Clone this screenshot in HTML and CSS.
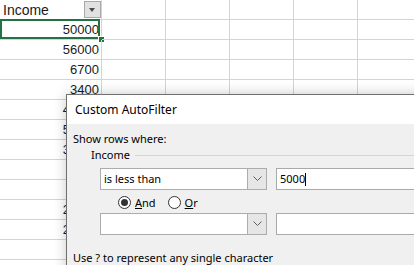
FILE: index.html
```html
<!DOCTYPE html>
<html lang="en">
<head>
    <meta charset="UTF-8">
    <meta name="viewport" content="width=device-width, initial-scale=1.0">
    <title>Custom AutoFilter</title>
    <link rel="stylesheet" href="styles.css">
</head>
<body>
    <!-- Worksheet -->
    <div class="sheet">
        <div class="row">
            <div class="cell col-a head">Income<span class="filter-btn"></span></div>
            <div class="cell"></div><div class="cell"></div><div class="cell"></div><div class="cell"></div><div class="cell"></div><div class="cell"></div>
        </div>
        <div class="row">
            <div class="cell col-a num selected">50000<span class="fill-handle"></span></div>
            <div class="cell"></div><div class="cell"></div><div class="cell"></div><div class="cell"></div><div class="cell"></div><div class="cell"></div>
        </div>
        <div class="row">
            <div class="cell col-a num">56000</div>
            <div class="cell"></div><div class="cell"></div><div class="cell"></div><div class="cell"></div><div class="cell"></div><div class="cell"></div>
        </div>
        <div class="row">
            <div class="cell col-a num">6700</div>
            <div class="cell"></div><div class="cell"></div><div class="cell"></div><div class="cell"></div><div class="cell"></div><div class="cell"></div>
        </div>
        <div class="row">
            <div class="cell col-a num">3400</div>
            <div class="cell"></div><div class="cell"></div><div class="cell"></div><div class="cell"></div><div class="cell"></div><div class="cell"></div>
        </div>
        <div class="row">
            <div class="cell col-a num">45000</div>
            <div class="cell"></div><div class="cell"></div><div class="cell"></div><div class="cell"></div><div class="cell"></div><div class="cell"></div>
        </div>
        <div class="row">
            <div class="cell col-a num">52000</div>
            <div class="cell"></div><div class="cell"></div><div class="cell"></div><div class="cell"></div><div class="cell"></div><div class="cell"></div>
        </div>
        <div class="row">
            <div class="cell col-a num">38000</div>
            <div class="cell"></div><div class="cell"></div><div class="cell"></div><div class="cell"></div><div class="cell"></div><div class="cell"></div>
        </div>
        <div class="row">
            <div class="cell col-a num">7800</div>
            <div class="cell"></div><div class="cell"></div><div class="cell"></div><div class="cell"></div><div class="cell"></div><div class="cell"></div>
        </div>
        <div class="row">
            <div class="cell col-a num">9100</div>
            <div class="cell"></div><div class="cell"></div><div class="cell"></div><div class="cell"></div><div class="cell"></div><div class="cell"></div>
        </div>
        <div class="row">
            <div class="cell col-a num">21000</div>
            <div class="cell"></div><div class="cell"></div><div class="cell"></div><div class="cell"></div><div class="cell"></div><div class="cell"></div>
        </div>
        <div class="row">
            <div class="cell col-a num">24000</div>
            <div class="cell"></div><div class="cell"></div><div class="cell"></div><div class="cell"></div><div class="cell"></div><div class="cell"></div>
        </div>
        <div class="row">
            <div class="cell col-a num">6500</div>
            <div class="cell"></div><div class="cell"></div><div class="cell"></div><div class="cell"></div><div class="cell"></div><div class="cell"></div>
        </div>
        <div class="row">
            <div class="cell col-a num"></div>
            <div class="cell"></div><div class="cell"></div><div class="cell"></div><div class="cell"></div><div class="cell"></div><div class="cell"></div>
        </div>
    </div>

    <!-- Custom AutoFilter dialog -->
    <div class="dialog">
        <div class="dialog-title">Custom AutoFilter</div>
        <div class="dialog-body">
            <div class="label">Show rows where:</div>
            <div class="group-label"><span>Income</span></div>

            <div class="criteria">
                <div class="combo">
                    <span class="combo-text">is less than</span>
                    <span class="combo-btn"><svg width="9" height="6" viewBox="0 0 9 6"><path d="M0.5 0.5 L4.5 4.5 L8.5 0.5" fill="none" stroke="#606060" stroke-width="1"/></svg></span>
                </div>
                <div class="textbox">5000<span class="caret"></span></div>
            </div>

            <div class="radios">
                <label class="radio"><span class="dot checked"></span><span><u>A</u>nd</span></label>
                <label class="radio"><span class="dot"></span><span><u>O</u>r</span></label>
            </div>

            <div class="criteria second">
                <div class="combo">
                    <span class="combo-text"></span>
                    <span class="combo-btn"><svg width="9" height="6" viewBox="0 0 9 6"><path d="M0.5 0.5 L4.5 4.5 L8.5 0.5" fill="none" stroke="#606060" stroke-width="1"/></svg></span>
                </div>
                <div class="textbox"></div>
            </div>

            <div class="hint">Use ? to represent any single character</div>
        </div>
    </div>
</body>
</html>
```

FILE: styles.css
```css
/* General */
body {
    margin: 0;
    width: 414px;
    height: 265px;
    overflow: hidden;
    position: relative;
    background: #ffffff;
}

/* Worksheet grid */
.sheet {
    font-family: "Liberation Sans", Arial, sans-serif;
    font-size: 13px;
    color: #1a1a1a;
}
.row {
    display: grid;
    grid-template-columns: 102px repeat(5, 64px) 1fr;
    height: 20px;
}
.cell {
    box-sizing: border-box;
    height: 20px;
    border-right: 1px solid #d4d4d4;
    border-bottom: 1px solid #d4d4d4;
    position: relative;
    display: flex;
    align-items: flex-end;
    line-height: 16px;
    padding-bottom: 1px;
}
.cell.head {
    font-size: 14px;
    padding-left: 3px;
}
.cell.num {
    justify-content: flex-end;
    padding-right: 2px;
}
.filter-btn {
    position: absolute;
    right: 0;
    top: 1px;
    width: 15px;
    height: 15px;
    background: #e1e1e1;
    border: 1px solid #a9a9a9;
}
.filter-btn::after {
    content: "";
    position: absolute;
    left: 4px;
    top: 6px;
    border-left: 3.5px solid transparent;
    border-right: 3.5px solid transparent;
    border-top: 4px solid #4a4a4a;
}
.selected::before {
    content: "";
    position: absolute;
    left: 0;
    top: -1px;
    right: 1px;
    bottom: 0;
    border: 2px solid #217346;
}
.fill-handle {
    position: absolute;
    left: 98px;
    top: 16px;
    width: 5px;
    height: 5px;
    background: #217346;
    border-left: 1px solid #ffffff;
    border-top: 1px solid #ffffff;
}

/* Dialog */
.dialog {
    position: absolute;
    left: 66px;
    top: 94px;
    width: 420px;
    height: 200px;
    border: 1px solid #707070;
    background: #f0f0f0;
    box-shadow: 0 0 12px rgba(0, 0, 0, 0.22);
    font-family: "Noto Sans", "Segoe UI", sans-serif;
    font-size: 11px;
    color: #000000;
}
.dialog-title {
    height: 29px;
    background: #ffffff;
    font-size: 12px;
    line-height: 29px;
    padding-left: 8px;
}
.dialog-body {
    padding: 7px 0 0 6px;
    display: flex;
    flex-direction: column;
}
.label {
    line-height: 16px;
}
.group-label {
    display: flex;
    align-items: center;
    gap: 5px;
    margin-left: 18px;
    line-height: 16px;
}
.group-label::after {
    content: "";
    flex: 1;
    border-top: 1px solid #d5d5d5;
    margin-top: 1px;
}
.criteria {
    display: flex;
    gap: 9px;
    margin: 5px 0 0 27px;
}
.criteria.second {
    margin-top: 5px;
}
.combo {
    box-sizing: border-box;
    width: 167px;
    height: 22px;
    border: 1px solid #acacac;
    background: #ffffff;
    display: flex;
}
.combo-text {
    flex: 1;
    padding-left: 3px;
    line-height: 20px;
}
.combo-btn {
    box-sizing: border-box;
    width: 19px;
    background: #e6e6e6;
    border-left: 1px solid #acacac;
    display: flex;
    align-items: center;
    justify-content: center;
}
.textbox {
    box-sizing: border-box;
    flex: 1;
    height: 22px;
    border: 1px solid #a9a9a9;
    background: #ffffff;
    padding-left: 3px;
    line-height: 20px;
    display: flex;
    align-items: center;
}
.caret {
    width: 1px;
    height: 13px;
    background: #000000;
}
.radios {
    display: flex;
    gap: 12px;
    margin: 6px 0 0 45px;
    height: 12px;
    align-items: center;
}
.radio {
    display: flex;
    align-items: center;
    gap: 4px;
}
.dot {
    box-sizing: border-box;
    width: 13px;
    height: 13px;
    border: 1px solid #333333;
    border-radius: 50%;
    background: #ffffff;
    display: flex;
    align-items: center;
    justify-content: center;
}
.dot.checked::after {
    content: "";
    width: 7px;
    height: 7px;
    border-radius: 50%;
    background: #333333;
}
.hint {
    margin-top: 15px;
    line-height: 16px;
}
```
